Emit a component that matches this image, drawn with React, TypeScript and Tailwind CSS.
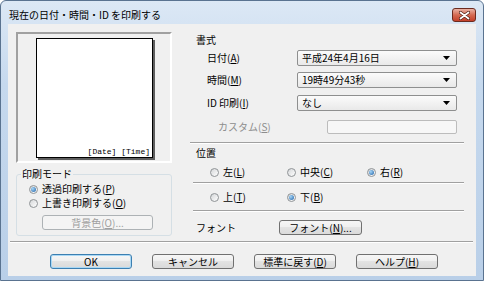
import React from "react"

const Radio = ({ checked = false }: { checked?: boolean }) => (
    <span className="flex h-[9px] w-[9px] shrink-0 items-center justify-center rounded-full border border-[#8f9396] bg-[linear-gradient(135deg,#d4d6d8,#ffffff)]">
        {checked && <span className="h-[5px] w-[5px] rounded-full bg-[radial-gradient(circle_at_35%_35%,#a6d6f7,#1b5ea6)]" />}
    </span>
)

const RadioItem = ({ checked = false, children, className = "" }: { checked?: boolean; children: React.ReactNode; className?: string }) => (
    <div className={`flex h-[12px] items-center gap-[4px] ${className}`}>
        <Radio checked={checked} />
        <span className="leading-[12px]">{children}</span>
    </div>
)

const Combo = ({ value }: { value: string }) => (
    <div className="flex h-[16px] w-[160px] items-center justify-between rounded-[2px] border border-[#8e8f8f] bg-[linear-gradient(#fbfbfb,#e9e9e9)] pl-[4px] pr-[6px]">
        <span className="leading-[12px]">{value}</span>
        <svg width="7" height="4" viewBox="0 0 7 4">
            <path d="M0 0h7L3.5 4z" fill="#000" />
        </svg>
    </div>
)

const Button = ({ children, primary = false, className = "" }: { children: React.ReactNode; primary?: boolean; className?: string }) => (
    <div
        className={`flex h-[15px] items-center justify-center rounded-[3px] border leading-[12px] bg-[linear-gradient(#f6f6f6_0%,#efefef_49%,#e3e3e3_50%,#dadada_100%)] ${
            primary ? "border-[#3c7fb1] shadow-[inset_0_0_0_1px_#a9d8f5]" : "border-[#707070]"
        } ${className}`}
    >
        {children}
    </div>
)

const Separator = ({ className = "" }: { className?: string }) => (
    <div className={`h-[2px] border-t border-[#a0a0a0] border-b border-b-white ${className}`} />
)

export default function App() {
    return (
        <div className="flex h-[281px] w-[484px] flex-col rounded-t-[6px] border border-[#5a7390] bg-[linear-gradient(#dce8f5,#c6d9ee_30%,#b9cfe8)] font-['Noto_Sans_CJK_JP','Noto_Sans',sans-serif] text-[10px] text-black">
            {/* title bar */}
            <div className="flex h-[23px] items-start justify-between">
                <span className="ml-[8px] mt-[8px] leading-[12px]">現在の日付・時間・ID を印刷する</span>
                <div className="mr-[7px] mt-[7px] flex h-[14px] w-[24px] items-center justify-center rounded-[3px] border border-[#6b2b1f] bg-[linear-gradient(#eab3a5,#d46a52_50%,#c4402a)]">
                    <svg width="11" height="9" viewBox="0 0 11 9">
                        <path d="M1.5 1.5l8 6M9.5 1.5l-8 6" stroke="#4b1c12" strokeWidth="3.2" strokeLinecap="round" />
                        <path d="M1.5 1.5l8 6M9.5 1.5l-8 6" stroke="#ffffff" strokeWidth="1.8" strokeLinecap="round" />
                    </svg>
                </div>
            </div>

            {/* client area */}
            <div className="mx-[7px] flex h-[252px] flex-col bg-[#f0f0f0]">
                <div className="flex h-[217px] pl-[8px] pt-[8px]">
                    {/* left column */}
                    <div className="flex w-[156px] flex-col">
                        <div className="h-[131px] border-2 border-b-white border-l-[#a0a0a0] border-r-white border-t-[#a0a0a0]">
                            <div className="ml-[18px] mt-[4px] flex h-[120px] w-[117px] items-end justify-end border border-black bg-white pb-[1px] pr-[2px] shadow-[2px_2px_0_#5e5e5e]">
                                <span className="font-['Liberation_Mono',monospace] text-[8px] leading-[9px]">[Date] [Time]</span>
                            </div>
                        </div>
                        <fieldset className="mt-[5px] rounded-[3px] border border-[#d5dfe5] pb-[5px]">
                            <legend className="ml-[4px] px-[1px] leading-[12px]">印刷モード</legend>
                            <div className="flex flex-col pl-[12px] pt-[3px]">
                                <RadioItem checked>
                                    透過印刷する(<u>P</u>)
                                </RadioItem>
                                <RadioItem className="mt-[2px]">
                                    上書き印刷する(<u>O</u>)
                                </RadioItem>
                                <div className="ml-[13px] mt-[6px] flex h-[15px] w-[111px] items-center justify-center rounded-[3px] border border-[#adb2b5] bg-[#f4f4f4] leading-[12px] text-[#a0a0a0]">
                                    背景色(<u>O</u>)...
                                </div>
                            </div>
                        </fieldset>
                    </div>

                    {/* right column */}
                    <div className="ml-[18px] flex w-[274px] flex-col">
                        <div className="mt-[2px] pl-[6px] leading-[12px]">書式</div>
                        <div className="mt-[4px] flex items-center pl-[17px]">
                            <span className="w-[90px] leading-[12px]">
                                日付(<u>A</u>)
                            </span>
                            <Combo value="平成24年4月16日" />
                        </div>
                        <div className="mt-[6px] flex items-center pl-[17px]">
                            <span className="w-[90px] leading-[12px]">
                                時間(<u>M</u>)
                            </span>
                            <Combo value="19時49分43秒" />
                        </div>
                        <div className="mt-[7px] flex items-center pl-[17px]">
                            <span className="w-[90px] leading-[12px]">
                                ID 印刷(<u>I</u>)
                            </span>
                            <Combo value="なし" />
                        </div>
                        <div className="mt-[9px] flex items-center pl-[28px] text-[#8d8d8d]">
                            <span className="w-[109px] leading-[12px]">
                                カスタム(<u>S</u>)
                            </span>
                            <div className="h-[14px] w-[130px] rounded-[2px] border border-[#bcbcbc] bg-[#f7f7f7]" />
                        </div>
                        <Separator className="mt-[8px]" />
                        <div className="mt-[3px] pl-[6px] leading-[12px]">位置</div>
                        <div className="mt-[7px] flex pl-[20px]">
                            <RadioItem className="w-[77px]">
                                左(<u>L</u>)
                            </RadioItem>
                            <RadioItem className="w-[80px]">
                                中央(<u>C</u>)
                            </RadioItem>
                            <RadioItem checked>
                                右(<u>R</u>)
                            </RadioItem>
                        </div>
                        <Separator className="ml-[3px] mt-[4px]" />
                        <div className="mt-[7px] flex pl-[20px]">
                            <RadioItem className="w-[77px]">
                                上(<u>T</u>)
                            </RadioItem>
                            <RadioItem checked>
                                下(<u>B</u>)
                            </RadioItem>
                        </div>
                        <Separator className="ml-[3px] mt-[7px]" />
                        <div className="mt-[8px] flex items-center pl-[6px]">
                            <span className="w-[83px] leading-[12px]">フォント</span>
                            <Button className="w-[83px]">
                                フォント(<u>N</u>)...
                            </Button>
                        </div>
                    </div>
                </div>

                <Separator className="ml-[2px] mr-[3px]" />
                <div className="flex gap-[20px] pl-[42px] pt-[11px]">
                    <Button primary className="w-[82px]">
                        OK
                    </Button>
                    <Button className="w-[82px]">キャンセル</Button>
                    <Button className="w-[82px]">
                        標準に戻す(<u>D</u>)
                    </Button>
                    <Button className="w-[82px]">
                        ヘルプ(<u>H</u>)
                    </Button>
                </div>
            </div>
        </div>
    )
}
